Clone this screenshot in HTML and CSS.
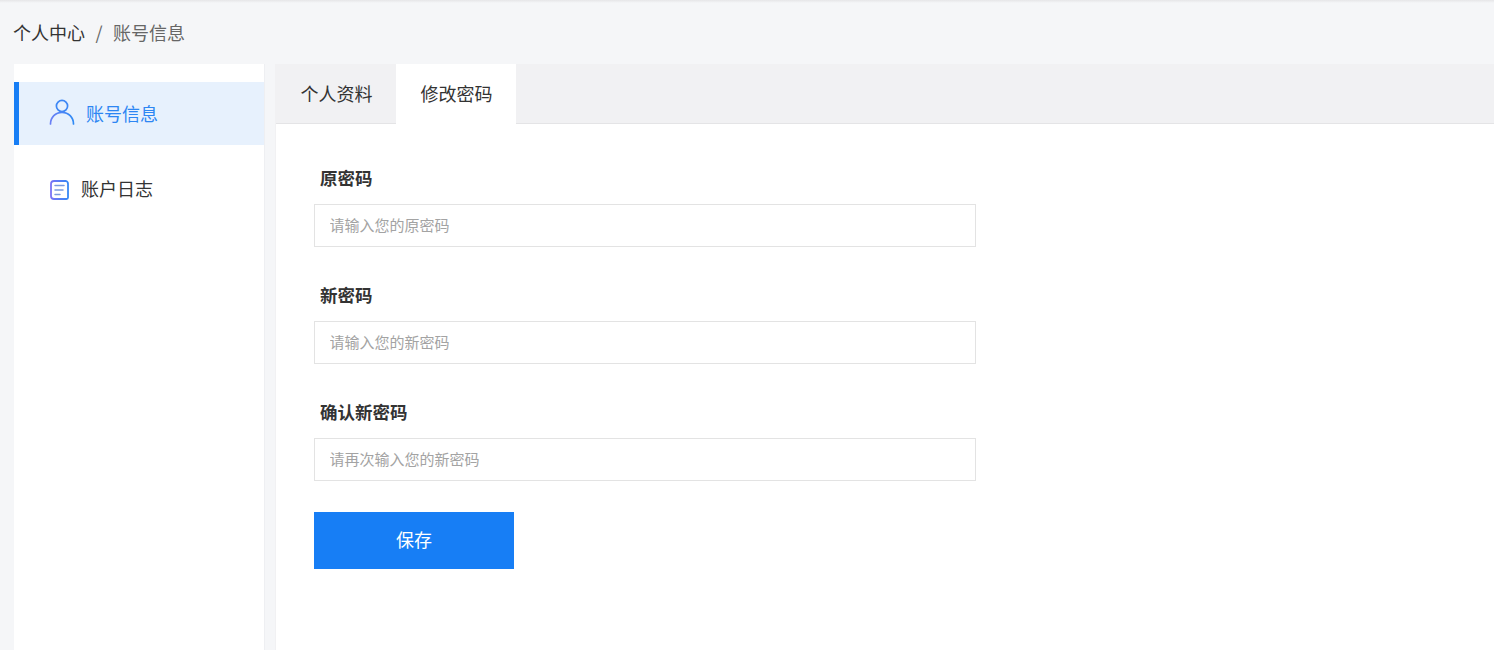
FILE: index.html
```html
<!DOCTYPE html>
<html lang="zh-CN">
<head>
<meta charset="utf-8">
<title>账号信息</title>
<link rel="stylesheet" href="styles.css">
</head>
<body>
<div class="topline"></div>
<nav class="crumbs"><span class="crumb-root">个人中心</span><span class="crumb-sep">/</span><span class="crumb-cur">账号信息</span></nav>
<div class="layout">
  <aside class="side">
    <a class="side-item active">
      <svg class="ico-user" viewBox="0 0 26 26" fill="none" stroke-width="1.7"><defs><linearGradient id="gu" x1="0" x2="1" y1="0" y2="0"><stop offset="0" stop-color="#6a7ff5"/><stop offset="1" stop-color="#2f8af5"/></linearGradient></defs><circle cx="13" cy="7" r="5.6" stroke="#3d87f5"/><path d="M1.500 25c0-6.600 5-11.700 11.500-11.700S24.500 18.400 24.500 25" stroke="url(#gu)" stroke-linecap="round"/></svg>
      <span>账号信息</span>
    </a>
    <a class="side-item log">
      <svg class="ico-log" viewBox="0 0 20 20" fill="none" stroke-width="1.800" stroke-linecap="round"><defs><linearGradient id="gl" gradientUnits="userSpaceOnUse" x1="0" x2="20" y1="0" y2="0"><stop offset="0" stop-color="#7d72f5"/><stop offset="1" stop-color="#2f8af5"/></linearGradient></defs><path d="M16 1H4a3 3 0 0 0-3 3v12a3 3 0 0 0 3 3h12.500a1.500 1.500 0 0 0 1.500-1.500V4a3 3 0 0 0-2-3z" stroke="url(#gl)"/><path d="M5 5.500h9M5 10h8M5 14.500h5" stroke="#7a9ae0" stroke-width="1.500"/></svg>
      <span>账户日志</span>
    </a>
  </aside>
  <main class="main">
    <div class="tabs">
      <a class="tab">个人资料</a>
      <a class="tab on">修改密码</a>
    </div>
    <form class="form">
      <div class="field">
        <label class="lbl">原密码</label>
        <input class="inp" type="password" placeholder="请输入您的原密码">
      </div>
      <div class="field">
        <label class="lbl">新密码</label>
        <input class="inp" type="password" placeholder="请输入您的新密码">
      </div>
      <div class="field">
        <label class="lbl">确认新密码</label>
        <input class="inp" type="password" placeholder="请再次输入您的新密码">
      </div>
      <button class="save" type="button">保存</button>
    </form>
  </main>
</div>
</body>
</html>
```
FILE: styles.css
```css
* { box-sizing: border-box; }
html, body { height: 100%; }
body {
  margin: 0;
  height: 650px;
  overflow: hidden;
  background: #f5f6f8;
  font-family: "Noto Sans CJK SC", "Liberation Sans", sans-serif;
  color: #333;
  display: flex;
  flex-direction: column;
}
.topline {
  height: 3px;
  background: linear-gradient(#e6e6e8, #f5f6f8);
  flex: none;
}
.crumbs {
  height: 61px;
  flex: none;
  display: flex;
  align-items: center;
  padding: 0 0 4px 13px;
  font-size: 18px;
  line-height: 24px;
}
.crumb-root { color: #333; }
.crumb-sep { color: #666; margin: 0 10.500px; }
.crumb-cur { color: #666; }
.layout {
  flex: 1;
  display: flex;
  padding-left: 14px;
  gap: 11px;
  min-height: 0;
}
.side {
  width: 251px;
  flex: none;
  background: #fff;
  padding-top: 18px;
  border-right: 1px solid #eeeff2;
}
.side-item {
  display: flex;
  align-items: center;
  height: 63px;
  font-size: 18px;
  color: #333;
  padding-left: 35px;
}
.side-item.active {
  background: #e7f1fd;
  border-left: 5px solid #177ef5;
  padding-left: 30px;
  color: #2d86f3;
}
.side-item.log { margin-top: 12px; padding-left: 36px; }
.side-item span { margin-top: -1px; }
.ico-user { width: 26px; height: 26px; margin-right: 11px; margin-top: -3px; flex: none; }
.ico-log { width: 20px; height: 20px; margin-right: 11px; margin-top: 3px; flex: none; }
.main {
  flex: 1;
  background: #fff;
  min-width: 0;
  border-left: 1px solid #f1f1f3;
  margin-left: -1px;
}
.tabs {
  display: flex;
  height: 60px;
  background: #f1f1f3;
  border-bottom: 1px solid #e4e4e6;
}
.tab {
  width: 120px;
  height: 60px;
  display: flex;
  align-items: center;
  justify-content: center;
  padding: 0 0 3px 1px;
  font-size: 18px;
  color: #333;
}
.tab.on { background: #fff; }
.form {
  padding: 39px 0 0 38px;
}
.field { margin-bottom: 33px; }
.field:last-of-type { margin-bottom: 31px; }
.lbl {
  display: block;
  height: 41px;
  line-height: 30px;
  padding-left: 6px;
  font-size: 17.500px;
  font-weight: 700;
  color: #333;
}
.inp {
  display: block;
  width: 662px;
  height: 43px;
  border: 1px solid #e3e3e3;
  background: #fff;
  padding: 0 15px 3px 14.500px;
  font: 15px "Noto Sans CJK SC", "Liberation Sans", sans-serif;
  outline: none;
}
.inp::placeholder { color: #a3a3a3; opacity: 1; }
.save {
  display: block;
  width: 200px;
  height: 57px;
  border: 0;
  background: #177ef5;
  color: #fff;
  font: 18px "Noto Sans CJK SC", "Liberation Sans", sans-serif;
  padding: 0 0 4px;
}
```
